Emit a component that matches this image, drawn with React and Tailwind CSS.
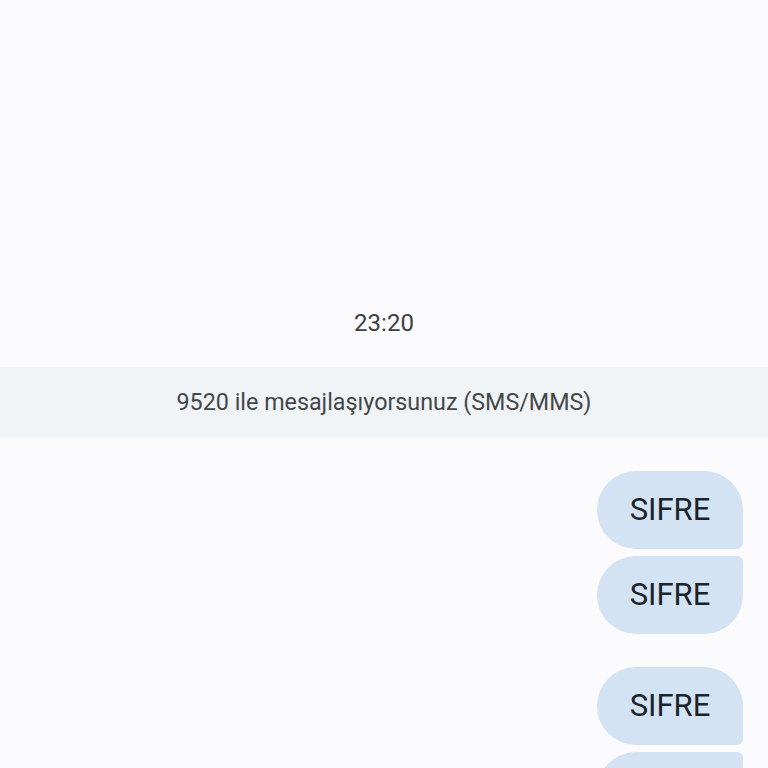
export default function App() {
  const bubbles = [
    { cls: "rounded-tl-[39px] rounded-bl-[39px] rounded-tr-[39px] rounded-br-[6px]", mt: "mt-0" },
    { cls: "rounded-tl-[39px] rounded-bl-[39px] rounded-tr-[6px] rounded-br-[39px]", mt: "mt-[7px]" },
    { cls: "rounded-tl-[39px] rounded-bl-[39px] rounded-tr-[39px] rounded-br-[6px]", mt: "mt-[33px]" },
    { cls: "rounded-tl-[39px] rounded-bl-[39px] rounded-tr-[6px] rounded-br-[39px]", mt: "mt-[7px]" },
  ];
  return (
    <div
      className="w-[768px] h-[768px] overflow-hidden bg-[#fbfbfd] flex flex-col"
      style={{ fontFamily: "Roboto, 'Noto Sans', sans-serif" }}
    >
      <div className="shrink-0 pt-[307px] h-[339px] text-center text-[24px] leading-[32px] text-[#3c4043]">
        23:20
      </div>
      <div className="shrink-0 mt-[28px] h-[71px] bg-[#f0f4f7] flex items-center justify-center text-[23.3px] text-[#44474a]">
        9520 ile mesajlaşıyorsunuz (SMS/MMS)
      </div>
      <div className="shrink-0 mt-[33px] flex flex-col items-end pr-[25px]">
        {bubbles.map((b, i) => (
          <div
            key={i}
            className={`${b.mt} ${b.cls} w-[146px] h-[78px] shrink-0 bg-[#d3e3f3] flex items-center justify-center text-[31px] text-[#1b232b]`}
          >
            SIFRE
          </div>
        ))}
      </div>
    </div>
  );
}
